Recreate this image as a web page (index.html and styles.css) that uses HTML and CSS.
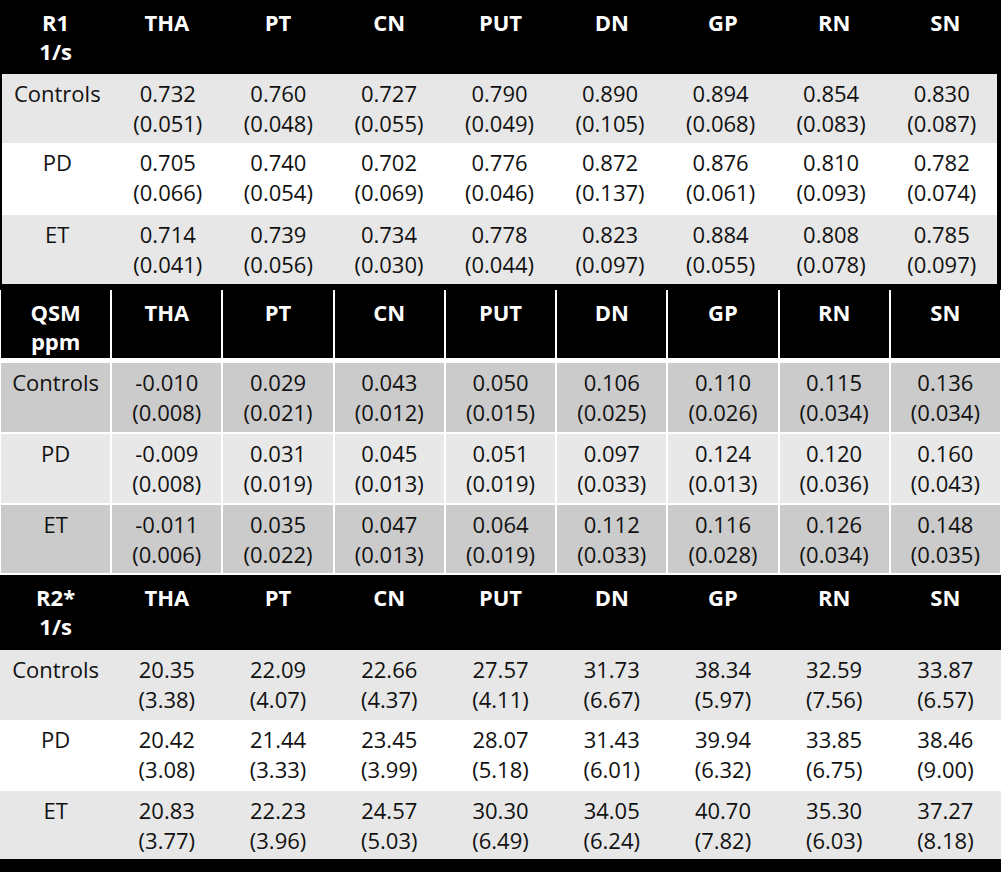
FILE: index.html
```html
<!DOCTYPE html>
<html>
<head>
<meta charset="utf-8">
<link rel="stylesheet" href="styles.css">
</head>
<body>
<div class="page">
  <section class="t1">
    <div class="row head h74">
      <div class="c">R1<br>1/s</div><div class="c">THA</div><div class="c">PT</div><div class="c">CN</div><div class="c">PUT</div><div class="c">DN</div><div class="c">GP</div><div class="c">RN</div><div class="c">SN</div>
    </div>
    <div class="body1">
      <div class="row g1 h69">
        <div class="c">Controls</div><div class="c">0.732<br>(0.051)</div><div class="c">0.760<br>(0.048)</div><div class="c">0.727<br>(0.055)</div><div class="c">0.790<br>(0.049)</div><div class="c">0.890<br>(0.105)</div><div class="c">0.894<br>(0.068)</div><div class="c">0.854<br>(0.083)</div><div class="c">0.830<br>(0.087)</div>
      </div>
      <div class="row w h72">
        <div class="c">PD</div><div class="c">0.705<br>(0.066)</div><div class="c">0.740<br>(0.054)</div><div class="c">0.702<br>(0.069)</div><div class="c">0.776<br>(0.046)</div><div class="c">0.872<br>(0.137)</div><div class="c">0.876<br>(0.061)</div><div class="c">0.810<br>(0.093)</div><div class="c">0.782<br>(0.074)</div>
      </div>
      <div class="row g1 h69">
        <div class="c">ET</div><div class="c">0.714<br>(0.041)</div><div class="c">0.739<br>(0.056)</div><div class="c">0.734<br>(0.030)</div><div class="c">0.778<br>(0.044)</div><div class="c">0.823<br>(0.097)</div><div class="c">0.884<br>(0.055)</div><div class="c">0.808<br>(0.078)</div><div class="c">0.785<br>(0.097)</div>
      </div>
    </div>
  </section>

  <section class="t2">
    <div class="row gap head2 h68">
      <div class="c">QSM<br>ppm</div><div class="c">THA</div><div class="c">PT</div><div class="c">CN</div><div class="c">PUT</div><div class="c">DN</div><div class="c">GP</div><div class="c">RN</div><div class="c">SN</div>
    </div>
    <div class="row gap dk h69">
      <div class="c">Controls</div><div class="c">-0.010<br>(0.008)</div><div class="c">0.029<br>(0.021)</div><div class="c">0.043<br>(0.012)</div><div class="c">0.050<br>(0.015)</div><div class="c">0.106<br>(0.025)</div><div class="c">0.110<br>(0.026)</div><div class="c">0.115<br>(0.034)</div><div class="c">0.136<br>(0.034)</div>
    </div>
    <div class="row gap lt h69">
      <div class="c">PD</div><div class="c">-0.009<br>(0.008)</div><div class="c">0.031<br>(0.019)</div><div class="c">0.045<br>(0.013)</div><div class="c">0.051<br>(0.019)</div><div class="c">0.097<br>(0.033)</div><div class="c">0.124<br>(0.013)</div><div class="c">0.120<br>(0.036)</div><div class="c">0.160<br>(0.043)</div>
    </div>
    <div class="row gap dk h68">
      <div class="c">ET</div><div class="c">-0.011<br>(0.006)</div><div class="c">0.035<br>(0.022)</div><div class="c">0.047<br>(0.013)</div><div class="c">0.064<br>(0.019)</div><div class="c">0.112<br>(0.033)</div><div class="c">0.116<br>(0.028)</div><div class="c">0.126<br>(0.034)</div><div class="c">0.148<br>(0.035)</div>
    </div>
  </section>

  <section class="t3">
    <div class="row head h75">
      <div class="c">R2*<br>1/s</div><div class="c">THA</div><div class="c">PT</div><div class="c">CN</div><div class="c">PUT</div><div class="c">DN</div><div class="c">GP</div><div class="c">RN</div><div class="c">SN</div>
    </div>
    <div class="row g1 h70">
      <div class="c">Controls</div><div class="c">20.35<br>(3.38)</div><div class="c">22.09<br>(4.07)</div><div class="c">22.66<br>(4.37)</div><div class="c">27.57<br>(4.11)</div><div class="c">31.73<br>(6.67)</div><div class="c">38.34<br>(5.97)</div><div class="c">32.59<br>(7.56)</div><div class="c">33.87<br>(6.57)</div>
    </div>
    <div class="row w h71">
      <div class="c">PD</div><div class="c">20.42<br>(3.08)</div><div class="c">21.44<br>(3.33)</div><div class="c">23.45<br>(3.99)</div><div class="c">28.07<br>(5.18)</div><div class="c">31.43<br>(6.01)</div><div class="c">39.94<br>(6.32)</div><div class="c">33.85<br>(6.75)</div><div class="c">38.46<br>(9.00)</div>
    </div>
    <div class="row g1 h68">
      <div class="c">ET</div><div class="c">20.83<br>(3.77)</div><div class="c">22.23<br>(3.96)</div><div class="c">24.57<br>(5.03)</div><div class="c">30.30<br>(6.49)</div><div class="c">34.05<br>(6.24)</div><div class="c">40.70<br>(7.82)</div><div class="c">35.30<br>(6.03)</div><div class="c">37.27<br>(8.18)</div>
    </div>
  </section>
</div>
</body>
</html>
```

FILE: styles.css
```css
html, body {
  margin: 0;
  padding: 0;
  background: #000;
}

.page {
  width: 1001px;
  height: 872px;
  background: #000;
  font-family: "Open Sans", Lato, "Liberation Sans", sans-serif;
  font-size: 22px;
  line-height: 30px;
  color: #111;
  overflow: hidden;
}

.row {
  display: grid;
  grid-template-columns: repeat(9, 1fr);
  box-sizing: border-box;
}

.c {
  text-align: center;
  padding-top: 4px;
}

.head .c,
.head2 .c {
  color: #fff;
  font-weight: 700;
  padding-top: 8px;
  line-height: 29px;
}

.head { background: #000; }

.h68 { height: 68px; }
.h69 { height: 69px; }
.h70 { height: 70px; }
.h71 { height: 71px; }
.h72 { height: 72px; }
.h74 { height: 74px; }
.h75 { height: 75px; }

.g1 { background: #e7e7e7; }
.w { background: #fff; }

/* table 1 */
.t1 {
  padding-bottom: 6px;
  background: #000;
}
.body1 {
  margin: 0 4px 0 2px;
}

/* table 2 */
.t2 {
  background: #fff;
  padding: 0 1px 2px 1px;
  display: flex;
  flex-direction: column;
  gap: 2px;
}
.t2 .gap {
  column-gap: 2px;
  background: #fff;
}
.head2 .c { background: #000; }
.head2 { margin-bottom: 3px; }
.dk .c { background: #cbcbcb; }
.lt .c { background: #e8e8e8; }

/* table 3 */
.t3 {
  background: #000;
  padding-bottom: 13px;
}
```
